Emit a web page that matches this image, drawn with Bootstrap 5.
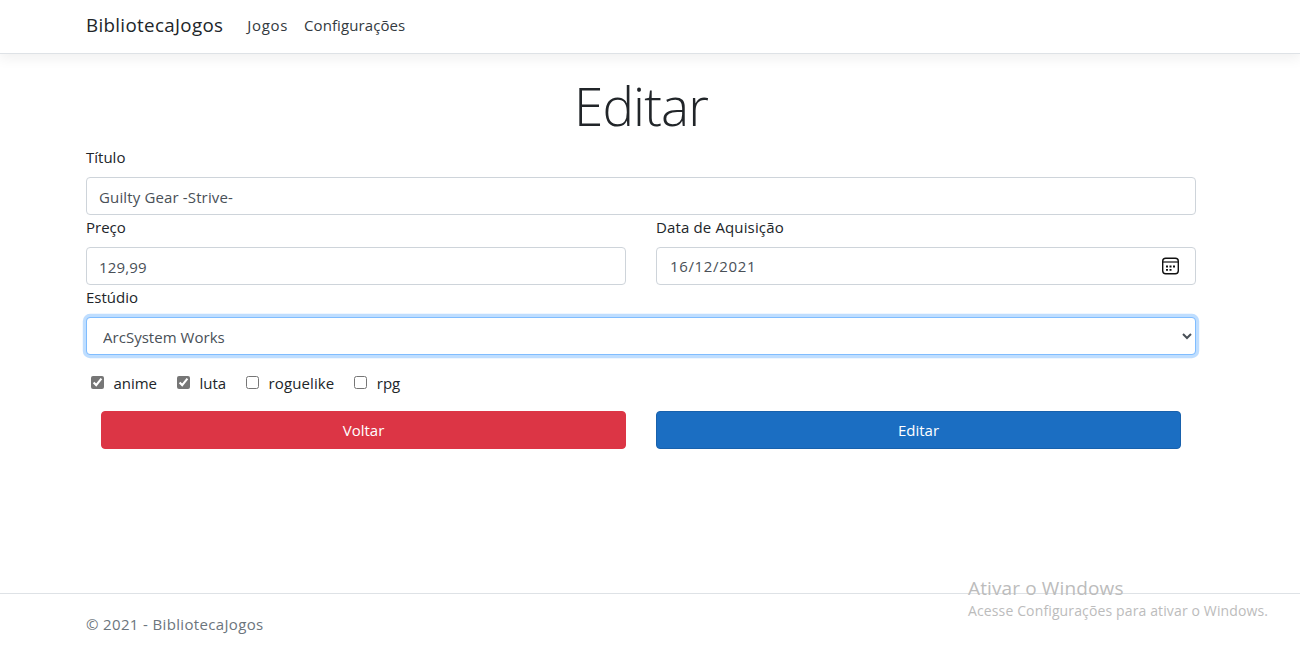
<!DOCTYPE html>
<html lang="pt-BR">
<head>
<meta charset="utf-8">
<title>Editar - BibliotecaJogos</title>
<link rel="stylesheet" href="https://cdn.jsdelivr.net/npm/bootstrap@5.3.0/dist/css/bootstrap.min.css">
<style>
body{font-family:"Open Sans","Noto Sans",sans-serif;font-size:15px;line-height:24px;color:#212529;background:#fff;overflow:hidden}
.page-gutter{padding-right:18px}
.page-width{width:1140px;max-width:1140px;padding:0 15px;margin:0 auto}
.site-header{height:54px;border-bottom:1px solid #dee2e6;box-shadow:0 4px 12px 1px rgba(0,0,0,.06)}
.site-header nav{height:50px}
.site-header .navbar-brand{font-size:18.75px;line-height:30px;padding:0;margin-right:16px;color:#212529;letter-spacing:.33px}
.site-header .nav-link{color:#343a40;padding:0 8px;letter-spacing:.1px}
.site-header .nav-link.first-link{letter-spacing:.65px}
.page-title{font-size:53px;font-weight:300;line-height:67px;margin:0 0 8px;padding-top:2px;height:67px;letter-spacing:-.9px}
.form-label{margin-bottom:8px;line-height:24px;height:24px;display:block}
.date-label{letter-spacing:.14px}
.form-control{height:38px;border:1px solid #ced4da;border-radius:4px;padding:7px 12px 5px;font-size:15px;line-height:24px;color:#495057;letter-spacing:.14px}
.form-control.date-field{letter-spacing:.65px;padding:6px 13px}
select.form-control{appearance:auto;padding:7px 13px 5px 12px;letter-spacing:.03px}
.form-control.is-current,.form-control.is-current:focus{border-color:#80bdff;box-shadow:0 0 0 3.2px rgba(0,123,255,.25)}
.calendar-icon{position:absolute;right:15px;top:9px}
.wide-gap{--bs-gutter-x:30px}
.tag-list{padding-left:5px;margin-top:16px;height:24px;gap:20px}
.tag-list label{display:flex;align-items:center}
.tag-list input{width:13px;height:13px;margin:0 9.4px 1px 0;accent-color:#767676}
.tag-list .long-tag{letter-spacing:.12px}
.action-row{margin-top:16px;padding:0 15px}
.btn{height:38px;border-radius:4px;font-size:15px;line-height:24px;padding:6px 12px}
.btn-danger{background:#dc3545;border-color:#dc3545}
.btn-primary{background:#1b6ec2;border-color:#1861ac}
.site-footer{position:absolute;left:0;right:0;top:593px;height:56px;border-top:1px solid #dee2e6;line-height:61px;color:#6c757d;letter-spacing:.35px}
.activation{position:absolute;left:968px;top:576px;color:#bcbcbc;white-space:nowrap;letter-spacing:.13px}
.activation-title{font-size:19px}
.activation-note{font-size:14px;line-height:22px}
</style>
</head>
<body>
<header class="site-header page-gutter">
  <nav class="page-width d-flex align-items-center">
    <a class="navbar-brand" href="#">BibliotecaJogos</a>
    <a class="nav-link first-link" href="#">Jogos</a>
    <a class="nav-link" href="#">Configurações</a>
  </nav>
</header>
<main class="page-gutter">
  <form class="page-width pt-3">
    <h1 class="page-title text-center">Editar</h1>
    <label class="form-label" for="titulo">Título</label>
    <input class="form-control" id="titulo" value="Guilty Gear -Strive-">
    <div class="row wide-gap">
      <div class="col-6">
        <label class="form-label" for="preco">Preço</label>
        <input class="form-control" id="preco" value="129,99">
      </div>
      <div class="col-6">
        <label class="form-label date-label" for="data">Data de Aquisição</label>
        <div class="position-relative">
          <input class="form-control date-field" id="data" value="16/12/2021">
          <svg class="calendar-icon" width="20" height="20" viewBox="0 0 20 20" fill="none" stroke="#111"><rect x="1.700" y="2.200" width="15.600" height="15.600" rx="3" stroke-width="1.400"/><path d="M2 6h15" stroke-width="1.200"/><path d="M5 10.500h2M8.500 10.500h2M12 10.500h2M5 13.800h2M8.500 13.800h2" stroke-width="1.800"/></svg>
        </div>
      </div>
    </div>
    <label class="form-label" for="estudio">Estúdio</label>
    <select class="form-control is-current" id="estudio"><option>ArcSystem Works</option></select>
    <div class="tag-list d-flex">
      <label><input type="checkbox" checked>anime</label>
      <label><input type="checkbox" checked>luta</label>
      <label class="long-tag"><input type="checkbox">roguelike</label>
      <label><input type="checkbox">rpg</label>
    </div>
    <div class="action-row">
      <div class="row wide-gap">
        <div class="col-6"><button type="button" class="btn btn-danger w-100">Voltar</button></div>
        <div class="col-6"><button type="button" class="btn btn-primary w-100">Editar</button></div>
      </div>
    </div>
  </form>
</main>
<footer class="site-footer page-gutter"><div class="page-width">© 2021 - BibliotecaJogos</div></footer>
<div class="activation">
  <div class="activation-title">Ativar o Windows</div>
  <div class="activation-note">Acesse Configurações para ativar o Windows.</div>
</div>
<script src="https://cdn.jsdelivr.net/npm/bootstrap@5.3.0/dist/js/bootstrap.bundle.min.js"></script>
</body>
</html>
